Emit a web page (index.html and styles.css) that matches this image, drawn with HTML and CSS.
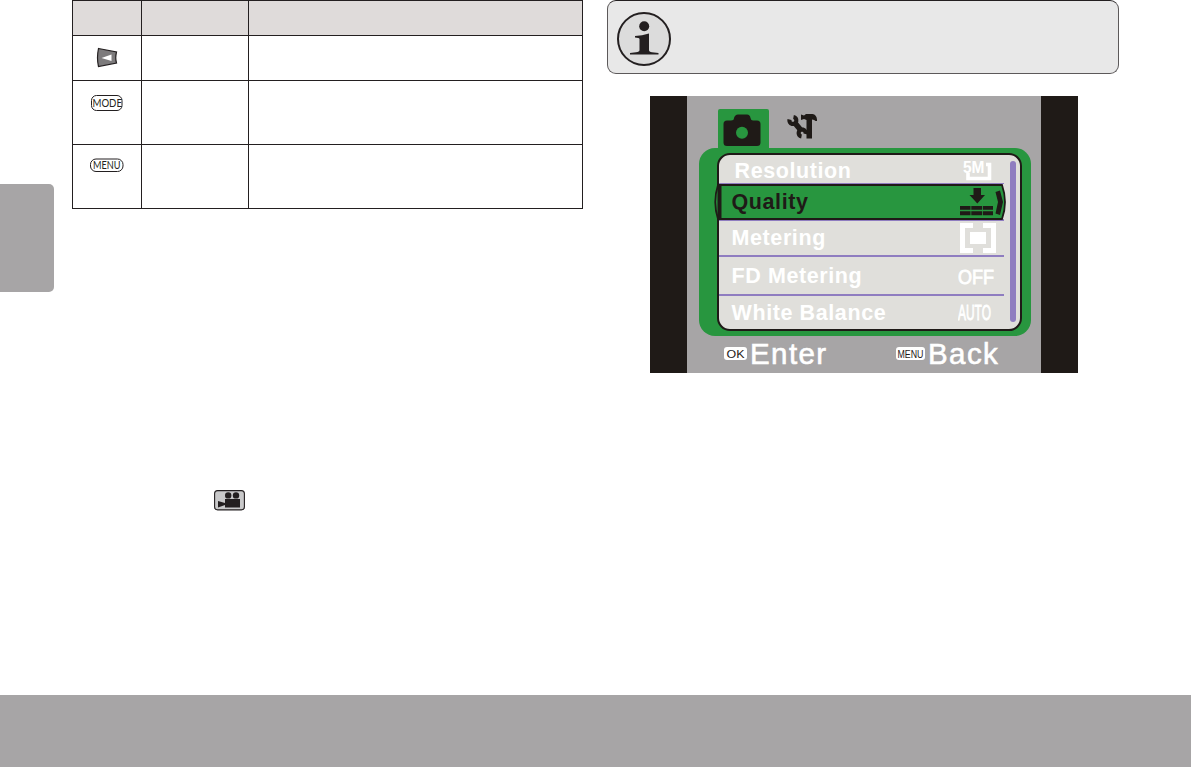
FILE: index.html
```
<!DOCTYPE html>
<html lang="en">
<head>
  <meta charset="UTF-8">
  <meta name="viewport" content="width=device-width, initial-scale=1.0">
  <title>Quality</title>
  <link rel="stylesheet" href="styles.css">
</head>
<body>
  <main class="page">
    <div class="side-tab"></div>

    <section class="left">
      <table class="keys">
        <tr class="head"><th class="col-key"></th><th class="col-name"></th><th></th></tr>
        <tr class="short">
          <td>
            <svg class="key-arrow" width="24" height="22" viewBox="0 0 24 22">
              <path d="M2.5 1.5 L20.5 5 Q19 11 20.5 16 L2.5 19.5 Q.5 11 2.5 1.5Z" fill="#7d7b7c" stroke="#231f20" stroke-width="1.2"/>
              <path d="M5.5 11 L15.5 7.5 V14Z" fill="#fff"/>
            </svg>
          </td>
          <td></td><td></td>
        </tr>
        <tr class="tall">
          <td>
            <svg class="key-mode" width="40" height="22" viewBox="-3 -2 40 22">
              <rect x="1.5" y=".5" width="30.5" height="15" rx="5" fill="#fff" stroke="#231f20"/>
              <text x="2.5" y="12" textLength="29.5" lengthAdjust="spacingAndGlyphs">MODE</text>
            </svg>
          </td>
          <td></td><td></td>
        </tr>
        <tr class="tall">
          <td>
            <svg class="key-menu" width="42" height="22" viewBox="-3 -3 42 22">
              <rect x="1.5" y="1" width="32.5" height="12.5" rx="5.5" fill="#fff" stroke="#231f20"/>
              <text x="4" y="11" textLength="27.5" lengthAdjust="spacingAndGlyphs">MENU</text>
            </svg>
          </td>
          <td></td><td></td>
        </tr>
      </table>

      <svg class="movie" width="32" height="21" viewBox="0 0 32 21">
        <rect x=".6" y=".6" width="29.8" height="19.3" rx="3" fill="#c9c9ca" stroke="#231f20" stroke-width="1.1"/>
        <circle cx="14.2" cy="5.4" r="3.2" fill="#231f20"/>
        <circle cx="22" cy="5.4" r="3.2" fill="#231f20"/>
        <path d="M11 9 H26 V17.5 H11 V15 L4 17.5 V11 L11 13Z" fill="#231f20"/>
      </svg>
    </section>

    <section class="right">
      <div class="info">
        <svg width="54" height="54" viewBox="0 0 54 54">
          <circle cx="27" cy="27" r="26" fill="#dcdcdc" stroke="#231f20" stroke-width="2"/>
          <circle cx="27.2" cy="14.2" r="5" fill="#231f20"/>
          <path d="M18 24 Q25 23.5 32 21.5 V38 Q32 40 35 40.3 L41.5 41 V42.5 H13 V41 L19 40.3 Q22.5 40 22.5 38 V27 Q22 25.5 18 25.5Z" fill="#231f20"/>
        </svg>
      </div>

      <div class="screen">
        <div class="tabs">
          <div class="tab active">
            <svg width="38" height="33" viewBox="0 0 38 33">
              <path d="M4 6.5 H8 Q11 6.5 11 4 Q12 .5 15 .5 H24 Q27 .5 27.5 4 Q28 6.5 30 6.5 H34 Q37.5 6.5 37.5 10 V28.500 Q37.5 32 34 32 H4 Q.5 32 .5 28.500 V10 Q.5 6.5 4 6.5Z" fill="#1f1a17"/>
              <circle cx="19" cy="18.8" r="6" fill="#28963f"/>
            </svg>
          </div>
          <svg class="tools" width="32" height="28" viewBox="0 0 32 28">
            <g fill="none" stroke="#1f1a17">
              <path d="M3.5 6.5 A3.5 3.5 0 1 0 7.5 4" stroke-width="4.2"/>
              <path d="M8.5 9.5 L15.5 18" stroke-width="5.5"/>
              <path d="M15.5 23.500 A3.5 3.5 0 1 1 19.5 21" stroke-width="4.2"/>
            </g>
            <path d="M15 1.5 L18 2.5 L20 1 H26.5 Q30.5 1.5 31 6.5 V8 H29.5 Q28.5 6.5 26 6.5 V25.5 H20.5 V7 L18 6 L15 7Z" fill="#1f1a17"/>
          </svg>
        </div>

        <div class="panel">
          <div class="list">
            <div class="row resolution">
              <span class="label">Resolution</span>
              <svg class="size" width="34" height="30" viewBox="0 -4 34 30">
                <path d="M5 13 V18.5 H26.5 V4.5 H23" fill="none" stroke="#fff" stroke-width="3.6"/>
                <text x="0" y="13" textLength="21.5" lengthAdjust="spacingAndGlyphs">5M</text>
              </svg>
            </div>
            <div class="row quality">
              <svg class="cursor" width="293" height="38" viewBox="0 0 293 38">
                <path d="M4 2 H288 Q294 19 288 36 H4 Q-1.5 19 4 2Z" fill="#28963f" stroke="#1f1a17" stroke-width="1.8"/>
                <path d="M3.5 2 H7.5 V36 H3.5Z" fill="#1f1a17"/>
                <path d="M281.5 9 L286 7.5 L289 19 L286 32 L281.5 30.5 L284 19Z" fill="#1f1a17"/>
              </svg>
              <span class="label">Quality</span>
              <svg class="fine" width="34" height="28" viewBox="0 0 34 28">
                <path d="M13.5 0 H21 V7 H25 L17.3 15.5 L9.5 7 H13.5Z M0 18 H10.5 V21.7 H0Z M11.3 18 H22 V21.7 H11.3Z M22.8 18 H33 V21.7 H22.8Z M0 23.3 H10.5 V27.3 H0Z M11.3 23.3 H22 V27.3 H11.3Z M22.8 23.3 H33 V27.3 H22.8Z" fill="#1f1a17"/>
              </svg>
            </div>
            <div class="row metering">
              <span class="label">Metering</span>
              <svg width="36" height="30" viewBox="0 0 36 30">
                <path d="M0 0 H13 V5 H5 V25 H13 V30 H0Z M36 0 H23 V5 H31 V25 H23 V30 H36Z M10 9 H26 V21 H10Z" fill="#fff"/>
              </svg>
            </div>
            <div class="row fd">
              <span class="label">FD Metering</span>
              <svg class="value" width="42" height="30" viewBox="0 0 42 30"><text x="0" y="22.5" textLength="36" lengthAdjust="spacingAndGlyphs">OFF</text></svg>
            </div>
            <div class="row balance">
              <span class="label">White Balance</span>
              <svg class="value auto" width="42" height="32" viewBox="0 0 42 32"><text x="0" y="23" textLength="33" lengthAdjust="spacingAndGlyphs">AUTO</text></svg>
            </div>
          </div>
          <div class="scroll"></div>
        </div>

        <div class="hints">
          <span class="cap ok"><svg width="23" height="18" viewBox="0 0 23 18"><text x="2.5" y="13" textLength="18" lengthAdjust="spacingAndGlyphs">OK</text></svg></span>
          <span class="hint enter">Enter</span>
          <span class="cap menu"><svg width="29" height="18" viewBox="0 0 29 18"><text x="1.5" y="13" textLength="26" lengthAdjust="spacingAndGlyphs">MENU</text></svg></span>
          <span class="hint back">Back</span>
        </div>
      </div>
    </section>
  </main>
  <footer class="footer"></footer>
</body>
</html>
```
FILE: styles.css
```
* {
  box-sizing: border-box;
}

body {
  margin: 0;
  height: 767px;
  overflow: hidden;
  display: flex;
  flex-direction: column;
  background: #fff;
  font-family: "Liberation Sans", Arial, sans-serif;
}

svg {
  display: block;
  flex: none;
}

.page {
  height: 695px;
  display: flex;
}

.footer {
  height: 72px;
  background: #a7a5a6;
}

.side-tab {
  width: 54px;
  height: 108px;
  margin: 184px 18px 0 0;
  background: #a7a5a6;
  border-radius: 0 5px 5px 0;
}

/* key table */
.left {
  width: 511px;
}

.keys {
  width: 511px;
  table-layout: fixed;
  border-spacing: 1px;
  background: #231f20;
}

.keys th,
.keys td {
  padding: 0;
  background: #fff;
  vertical-align: top;
}

.keys th {
  background: #dfdbda;
}

.col-key { width: 68px; }
.col-name { width: 106px; }
.head { height: 34px; }
.short { height: 44px; }
.tall { height: 63px; }

.keys text {
  font-family: Lato, sans-serif;
  font-size: 11px;
  fill: #231f20;
}

.key-arrow { margin: 11px 0 0 23px; }
.key-mode { margin: 12px 0 0 14px; }
.key-menu { margin: 10px 0 0 13px; }

.movie {
  margin: 281px 0 0 142px;
}

/* note box and camera screen */
.right {
  width: 512px;
  margin-left: 24px;
}

.info {
  height: 74px;
  padding: 11px 0 0 9px;
  border: 1px solid #5c595a;
  border-top-color: #231f20;
  border-radius: 9px;
  background: #e8e8e8;
}

.screen {
  width: 428px;
  height: 277px;
  margin: 22px 0 0 43px;
  border: solid #1f1a17;
  border-width: 0 37px;
  background: #a7a5a6;
}

.tabs {
  height: 52px;
  padding: 13px 0 0 31px;
  display: flex;
}

.tab {
  width: 51px;
  height: 39px;
  padding: 5px 0 0 5px;
  border-radius: 2px 2px 0 0;
  background: #28963f;
}

.tools {
  margin: 4px 0 0 17px;
}

.panel {
  position: relative;
  width: 332px;
  height: 188px;
  margin-left: 12px;
  padding: 5px 9px 5px 18px;
  border-radius: 16px;
  background: #28963f;
}

.list {
  height: 178px;
  border: 2px solid #1f1a17;
  border-radius: 13px;
  background: #e0dfdb;
}

.row {
  position: relative;
  width: 285px;
  padding-left: 12.5px;
  display: flex;
  align-items: center;
  border-bottom: 2px solid #8f7dc0;
}

.label {
  position: relative;
  flex: 1;
  color: #fff;
  font-size: 21.5px;
  font-weight: bold;
  line-height: 24px;
  letter-spacing: .6px;
}

.resolution {
  height: 29px;
  padding: 3px 0 0 15.5px;
  border-bottom-width: 1px;
}

.quality { height: 37px; }
.quality .label { color: #1f1a17; }
.metering { height: 36px; }
.metering svg { margin-right: 8px; }
.fd { height: 39px; }
.balance { height: 33px; border: 0; }

.cursor {
  position: absolute;
  left: -5px;
  top: -1px;
}

.fine {
  position: relative;
  margin-right: 10px;
}

.size {
  margin-right: 7px;
}

.size text {
  font-size: 17px;
  font-weight: bold;
  fill: #fff;
}

.value {
  margin-right: 4px;
}

.value text {
  font-size: 20px;
  fill: #fff;
  stroke: #fff;
  stroke-width: .8px;
}

.auto text {
  font-size: 21.5px;
}

.scroll {
  position: absolute;
  right: 15px;
  top: 13px;
  width: 6px;
  height: 161px;
  border-radius: 3px;
  background: #8f7dc0;
}

.hints {
  height: 35px;
  padding-left: 37px;
  display: flex;
  align-items: center;
}

.cap {
  height: 13px;
  display: flex;
  align-items: center;
  border-radius: 3px;
  background: #fff;
}

.cap text {
  font-size: 11.5px;
  fill: #1f1a17;
}

.ok { width: 23px; }
.menu { width: 29px; }

.hint {
  color: #fff;
  font-size: 29.5px;
  line-height: 35px;
  letter-spacing: 1.4px;
  -webkit-text-stroke: .6px #fff;
}

.enter {
  width: 149px;
  padding-left: 3px;
}

.back {
  padding-left: 3px;
}
```
